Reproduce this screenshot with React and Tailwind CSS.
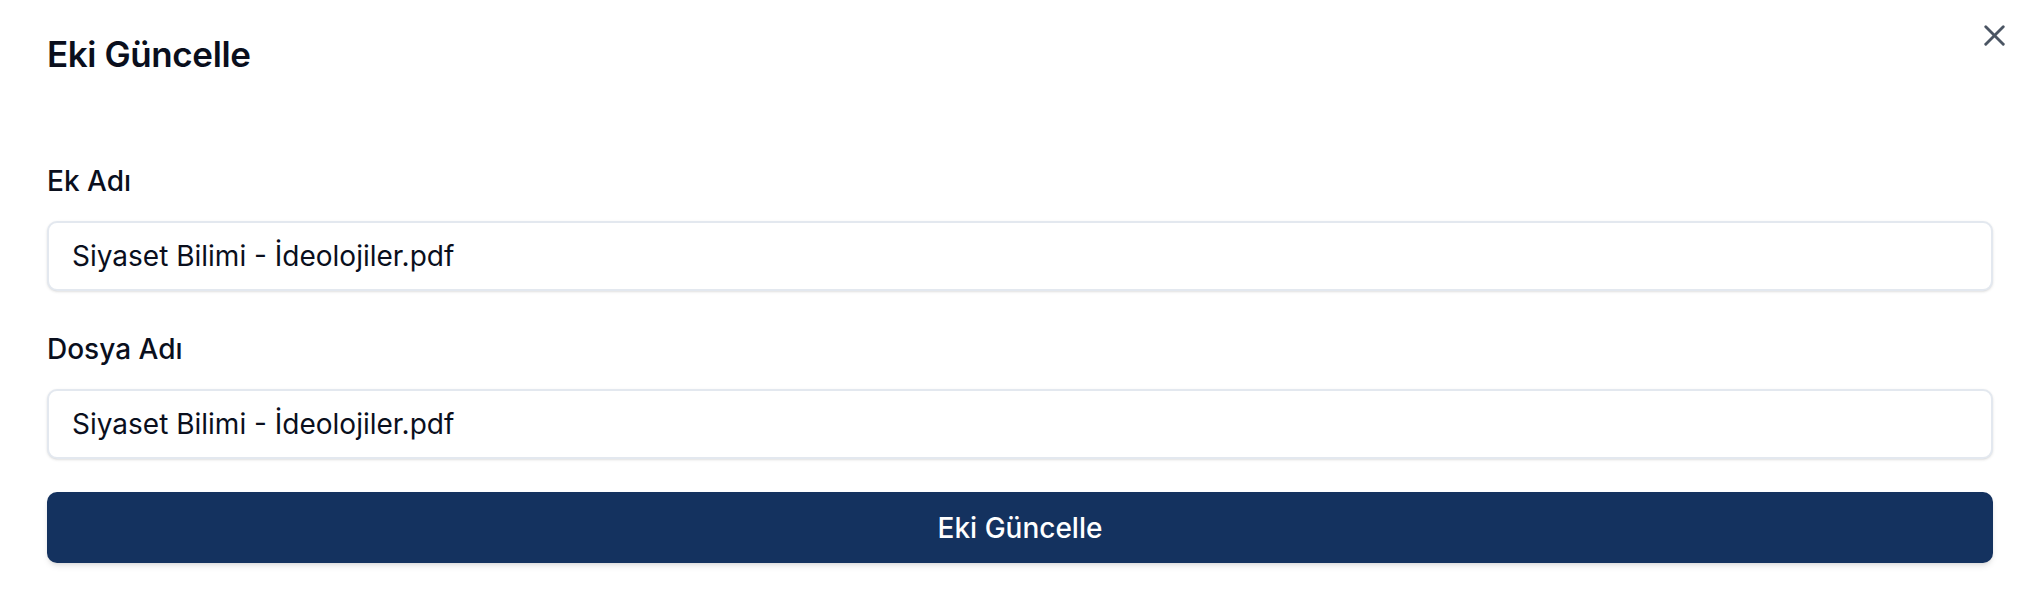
import React from 'react'
import { X } from 'lucide-react'

const Field = ({ label, value, className }) => (
    <div className={className}>
        <label className="block text-[28px] leading-[28px] font-medium text-[#0a0f1d]">{label}</label>
        <input
            readOnly
            defaultValue={value}
            className="mt-[26px] block h-[70px] w-full rounded-[10px] border-2 border-[#e3e8ef] bg-white pl-[23px] pr-[23px] text-[28px] text-[#0a0f1d] shadow-sm outline-none"
        />
    </div>
)

const App = () => {
    return (
        <div className="relative min-h-[602px] w-full bg-white font-['Inter','Noto_Sans',sans-serif]">
            <button className="absolute right-[24px] top-[18px] text-[#4b5563]">
                <X size={35} strokeWidth={2} />
            </button>

            <div className="pl-[47px] pr-[43px] pt-[30px]">
                <h2 className="text-[35px] leading-[49px] font-semibold tracking-[-0.4px] text-[#0a0f1d]">Eki Güncelle</h2>

                <Field className="mt-[88px]" label="Ek Adı" value="Siyaset Bilimi - İdeolojiler.pdf" />
                <Field className="mt-[44px]" label="Dosya Adı" value="Siyaset Bilimi - İdeolojiler.pdf" />

                <button className="mt-[33px] flex h-[71px] w-full items-center justify-center rounded-[10px] bg-[#14325f] text-[28px] font-medium text-white shadow-md">
                    Eki Güncelle
                </button>
            </div>
        </div>
    )
}

export default App
